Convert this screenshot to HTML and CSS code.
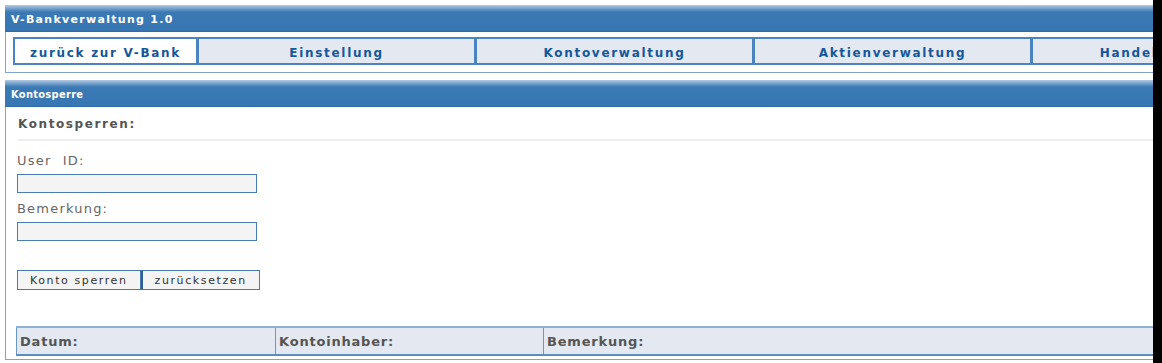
FILE: index.html
```html
<!DOCTYPE html>
<html lang="de">
<head>
  <meta charset="UTF-8">
  <title>V-Bankverwaltung 1.0</title>
  <link rel="stylesheet" href="styles.css">
</head>
<body>
  <div class="page">
    <div class="wrap">

      <div class="panel">
        <div class="panel-head">V-Bankverwaltung 1.0</div>
        <div class="panel-body nav-body">
          <ul class="nav">
            <li class="active"><a href="#">zurück zur V-Bank</a></li>
            <li><a href="#">Einstellung</a></li>
            <li><a href="#">Kontoverwaltung</a></li>
            <li><a href="#">Aktienverwaltung</a></li>
            <li><a href="#">Handelverwaltung</a></li>
          </ul>
        </div>
      </div>

      <div class="panel">
        <div class="panel-head small">Kontosperre</div>
        <div class="panel-body">
          <h2 class="title">Kontosperren:</h2>

          <form class="lock-form">
            <label for="uid">User ID:</label>
            <input type="text" id="uid">
            <label for="note">Bemerkung:</label>
            <input type="text" id="note">

            <div class="buttons">
              <button type="submit">Konto sperren</button>
              <button type="reset">zurücksetzen</button>
            </div>
          </form>

          <table class="list">
            <tr>
              <th class="col-date">Datum:</th>
              <th class="col-owner">Kontoinhaber:</th>
              <th>Bemerkung:</th>
            </tr>
          </table>
        </div>
      </div>

    </div>
  </div>
</body>
</html>
```

FILE: styles.css
```css
html, body {
  margin: 0;
  background: #000;
}

.page {
  width: 1153px;
  height: 363px;
  overflow: hidden;
  background: #fff;
}

.wrap {
  width: 1500px;
  padding: 5px 0 0 5px;
}

.panel {
  margin-bottom: 7px;
}

.panel-head {
  height: 27px;
  line-height: 30px;
  padding-left: 6px;
  color: #fff;
  font-family: Verdana, "DejaVu Sans", sans-serif;
  font-size: 11px;
  font-weight: bold;
  letter-spacing: 1.3px;
  background: linear-gradient(#b4cce4 0, #7fa6cf 3px, #3a79b4 7px, #3777b3 25px, #2f6aa3 27px);
}

.panel-head.small {
  letter-spacing: 0.3px;
  font-family: "DejaVu Sans Condensed", sans-serif;
}

.panel-body {
  border-left: 1px solid #7fa3c9;
  border-bottom: 1px solid #7fa3c9;
  padding: 0 0 3px 7px;
}

.nav-body {
  padding: 5px 0 7px 7px;
}

.nav {
  list-style: none;
  margin: 0;
  padding: 0;
  display: grid;
  grid-template-columns: 184px repeat(3, 278px) 288px;
  border: 2px solid #4a83bd;
  border-right: 0;
  background: #e3e8f1;
}

.nav li {
  border-right: 3px solid #4a83bd;
  height: 24px;
  line-height: 25px;
  text-align: center;
}

.nav li.active {
  background: #fff;
}

.nav a {
  color: #15579a;
  text-decoration: none;
  font-family: Verdana, "DejaVu Sans", sans-serif;
  font-size: 12px;
  font-weight: bold;
  letter-spacing: 1.7px;
}

.title {
  margin: 0 0 0 5px;
  height: 32px;
  line-height: 34px;
  border-bottom: 2px solid #eeeeee;
  color: #555;
  font-family: Verdana, "DejaVu Sans", sans-serif;
  font-size: 12px;
  font-weight: bold;
  letter-spacing: 1.6px;
}

.lock-form {
  padding: 10px 0 0 4px;
  display: flex;
  flex-direction: column;
  align-items: flex-start;
}

.lock-form label {
  color: #666;
  font-family: Verdana, "DejaVu Sans", sans-serif;
  font-size: 13px;
  letter-spacing: 1.2px;
  word-spacing: 6px;
  line-height: 20px;
}

.lock-form input {
  box-sizing: border-box;
  width: 240px;
  height: 19px;
  margin: 3px 0 5px;
  padding: 0 3px;
  border: 1px solid #4a7bae;
  background: #f4f4f4;
}

.lock-form input + label {
  margin-top: 1px;
}

.buttons {
  display: flex;
  margin-top: 24px;
}

.buttons button {
  box-sizing: border-box;
  height: 20px;
  margin: 0;
  padding: 0 12px;
  border: 1px solid #4a7bae;
  background: #f4f4f4;
  color: #333;
  font-family: Verdana, "DejaVu Sans", sans-serif;
  font-size: 11px;
  letter-spacing: 1.6px;
}

.buttons button + button {
  border-left-width: 2px;
  border-left-color: #2d5f94;
}

.list {
  margin: 36px 0 0 3px;
  width: 1300px;
  border-collapse: collapse;
  background: #e3e8f1;
}

.list th {
  height: 25px;
  padding: 1px 3px 0;
  text-align: left;
  border: 1px solid #6b97c6;
  border-top: 2px solid #8db0d5;
  border-bottom: 2px solid #5b8cc2;
  color: #555;
  font-family: "DejaVu Sans", sans-serif;
  font-size: 13px;
  font-weight: bold;
  letter-spacing: 0.8px;
}

.list .col-date { width: 252px; }
.list .col-owner { width: 261px; }
```
